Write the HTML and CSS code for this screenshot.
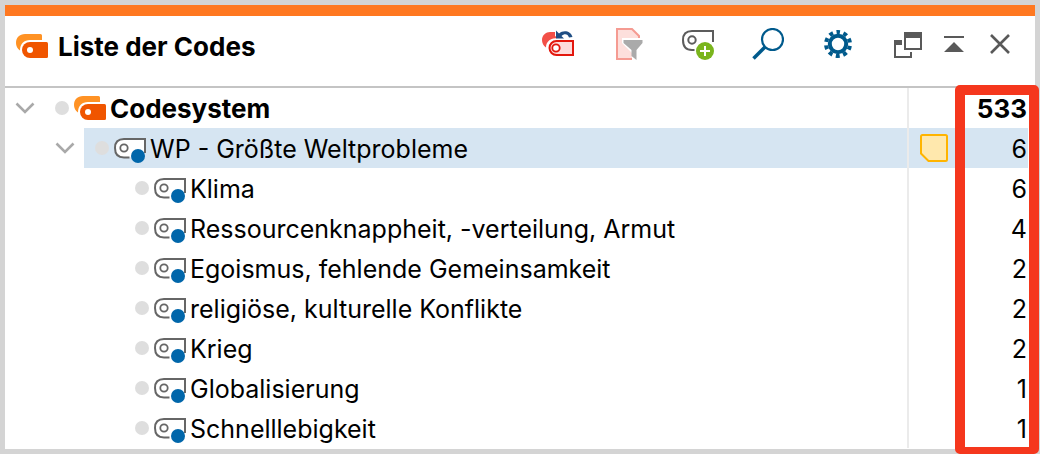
FILE: index.html
```html
<!DOCTYPE html>
<html lang="de">
<head>
    <meta charset="UTF-8">
    <meta name="viewport" content="width=device-width, initial-scale=1.0">
    <title>Liste der Codes</title>
    <link rel="stylesheet" href="styles.css">
</head>
<body>
    <svg class="symbols" aria-hidden="true">
        <symbol id="codes" viewBox="0 0 32 24">
            <path d="M4 16.5A9 9 0 0 1 0 9C0 3.5 3.5 0 9 0h15.500a1.500 1.500 0 0 1 1.500 1.500V6H14C8 6 4 10 4 16.500z" fill="#ff9224"/>
            <path d="M14 8h16.500A1.500 1.500 0 0 1 32 9.500v13a1.500 1.500 0 0 1-1.500 1.500H14a8 8 0 0 1 0-16z" fill="#f05500"/>
            <circle cx="14" cy="16" r="3" fill="#fff"/>
        </symbol>
        <symbol id="code" viewBox="0 0 32 30">
            <path d="M31 20V6H10C4 6 1 9 1 15s3 9.500 9 9.500h5.500" fill="#fff" stroke="#666" stroke-width="2"/>
            <circle cx="10" cy="15" r="3.700" fill="none" stroke="#666" stroke-width="1.800"/>
            <circle cx="24" cy="23" r="7" fill="#0066aa"/>
        </symbol>
        <symbol id="chevron" viewBox="0 0 20 12">
            <path d="M1.500 1.500L10 10l8.500-8.500" fill="none" stroke="#a9a9a9" stroke-width="2.600"/>
        </symbol>
    </svg>

    <main class="panel">
        <header class="panel-header">
            <svg class="codes-icon"><use href="#codes"/></svg>
            <h1>Liste der Codes</h1>
            <div class="tools">
                <button type="button" aria-label="Aktivierungen zurücksetzen">
                    <svg viewBox="0 0 32 32">
                        <path d="M4 19.500A9 9 0 0 1 0 12c0-5 4-8 8-8h5v4l3 2C9 10 4 13 4 19.500z" fill="#f25048"/>
                        <path d="M14 2.500v8h8l-2.500-2.500c3-3 6.500-2 7.500 1.500l3.500-.5C29 3 21.500 1.500 17 5.500z" fill="#1f4e84"/>
                        <path d="M14.500 13H31v14H14.500a7 7 0 0 1 0-14z" fill="#fddcdc" stroke="#e3170d" stroke-width="2"/>
                        <circle cx="14" cy="20" r="3.700" fill="#fff" stroke="#e3170d" stroke-width="1.800"/>
                    </svg>
                </button>
                <button type="button" aria-label="Filter">
                    <svg viewBox="0 0 32 32">
                        <path d="M5 1h15l7 7v23H5z" fill="#fddfdc" stroke="#f59b92" stroke-width="2"/>
                        <path d="M10 10h20v22H20v-7l-10-10z" fill="#fff"/>
                        <path d="M11.500 12h19v3L24.500 22v10l-5-4v-6l-8-7z" fill="#aaa"/>
                    </svg>
                </button>
                <button type="button" aria-label="Neuer Code">
                    <svg viewBox="0 0 32 32">
                        <path d="M31 14V3H10C4 3 1 6 1 12s3 10 9 10h2.500" fill="none" stroke="#5c5c5c" stroke-width="2"/>
                        <circle cx="10" cy="12" r="3.700" fill="none" stroke="#5c5c5c" stroke-width="2"/>
                        <circle cx="23" cy="23" r="9" fill="#7ab51d"/>
                        <path d="M23 18v10M18 23h10" stroke="#fff" stroke-width="2"/>
                    </svg>
                </button>
                <button type="button" aria-label="Suchen">
                    <svg viewBox="0 0 32 32">
                        <circle cx="20.500" cy="11.500" r="10.500" fill="none" stroke="#005a8c" stroke-width="2.200"/>
                        <path d="M13 19L1.500 30.500" stroke="#005a8c" stroke-width="3.600"/>
                    </svg>
                </button>
                <button type="button" aria-label="Einstellungen">
                    <svg viewBox="0 0 32 32">
                        <circle cx="16" cy="16" r="8.200" fill="none" stroke="#005a8c" stroke-width="4"/>
                        <circle cx="16" cy="16" r="12" fill="none" stroke="#005a8c" stroke-width="4" stroke-dasharray="4 3.540" stroke-dashoffset="2" transform="rotate(-90 16 16)"/>
                    </svg>
                </button>
                <button type="button" aria-label="Fenster lösen">
                    <svg viewBox="0 0 32 32">
                        <path d="M12 4h18v18H12zM14 10v10h14V10z" fill="#595959" fill-rule="evenodd"/>
                        <path d="M2 12h8v5H4v11h14v-4h2v6H2z" fill="#595959"/>
                    </svg>
                </button>
                <div class="window-tools">
                    <button type="button" aria-label="Minimieren">
                        <svg viewBox="0 0 32 32"><path d="M6 8h20v2H6zM16 14l10 10H6z" fill="#595959"/></svg>
                    </button>
                    <button type="button" aria-label="Schließen">
                        <svg viewBox="0 0 32 32"><path d="M7 7l18 18M25 7L7 25" stroke="#595959" stroke-width="2.600"/></svg>
                    </button>
                </div>
            </div>
        </header>

        <div class="tree">
            <table aria-label="Codesystem">
                <colgroup>
                    <col>
                    <col class="memo-col">
                    <col class="count-col">
                </colgroup>
                <tbody>
                    <tr class="root">
                        <td>
                            <div class="entry">
                                <button type="button" class="toggle" aria-label="Codesystem zuklappen"><svg><use href="#chevron"/></svg></button>
                                <div class="node"><span class="dot"></span><svg class="codes-icon"><use href="#codes"/></svg><span class="label">Codesystem</span></div>
                            </div>
                        </td>
                        <td class="memo"></td>
                        <td class="count">533</td>
                    </tr>
                    <tr class="selected">
                        <td>
                            <div class="entry level-1">
                                <button type="button" class="toggle" aria-label="WP zuklappen"><svg><use href="#chevron"/></svg></button>
                                <div class="node"><span class="dot"></span><svg class="code-icon"><use href="#code"/></svg><span class="label">WP - Größte Weltprobleme</span></div>
                            </div>
                        </td>
                        <td class="memo">
                            <button type="button" aria-label="Memo">
                                <svg viewBox="0 0 28 28"><path d="M2.500 1h23A1.500 1.500 0 0 1 27 2.500v23a1.500 1.500 0 0 1-1.500 1.500H8.500L1 19.500v-17A1.500 1.500 0 0 1 2.500 1z" fill="#ffe8ad" stroke="#ffb400" stroke-width="2"/></svg>
                            </button>
                        </td>
                        <td class="count">6</td>
                    </tr>
                    <tr>
                        <td><div class="entry level-2"><div class="node"><span class="dot"></span><svg class="code-icon"><use href="#code"/></svg><span class="label">Klima</span></div></div></td>
                        <td class="memo"></td>
                        <td class="count">6</td>
                    </tr>
                    <tr>
                        <td><div class="entry level-2"><div class="node"><span class="dot"></span><svg class="code-icon"><use href="#code"/></svg><span class="label">Ressourcenknappheit, -verteilung, Armut</span></div></div></td>
                        <td class="memo"></td>
                        <td class="count">4</td>
                    </tr>
                    <tr>
                        <td><div class="entry level-2"><div class="node"><span class="dot"></span><svg class="code-icon"><use href="#code"/></svg><span class="label">Egoismus, fehlende Gemeinsamkeit</span></div></div></td>
                        <td class="memo"></td>
                        <td class="count">2</td>
                    </tr>
                    <tr>
                        <td><div class="entry level-2"><div class="node"><span class="dot"></span><svg class="code-icon"><use href="#code"/></svg><span class="label">religiöse, kulturelle Konflikte</span></div></div></td>
                        <td class="memo"></td>
                        <td class="count">2</td>
                    </tr>
                    <tr>
                        <td><div class="entry level-2"><div class="node"><span class="dot"></span><svg class="code-icon"><use href="#code"/></svg><span class="label">Krieg</span></div></div></td>
                        <td class="memo"></td>
                        <td class="count">2</td>
                    </tr>
                    <tr>
                        <td><div class="entry level-2"><div class="node"><span class="dot"></span><svg class="code-icon"><use href="#code"/></svg><span class="label">Globalisierung</span></div></div></td>
                        <td class="memo"></td>
                        <td class="count">1</td>
                    </tr>
                    <tr>
                        <td><div class="entry level-2"><div class="node"><span class="dot"></span><svg class="code-icon"><use href="#code"/></svg><span class="label">Schnelllebigkeit</span></div></div></td>
                        <td class="memo"></td>
                        <td class="count">1</td>
                    </tr>
                </tbody>
            </table>
            <div class="count-frame"></div>
        </div>
    </main>
</body>
</html>
```

FILE: styles.css
```css
body {
    margin: 0;
    padding: 5px;
    background: #d4d4d4;
    color: #000;
    font-family: Inter, "Liberation Sans", sans-serif;
    font-size: 25px;
    line-height: 38px;
}

svg {
    display: block;
    flex-shrink: 0;
}

button {
    display: block;
    padding: 0;
    border: none;
    background: none;
    cursor: pointer;
}

.symbols {
    position: absolute;
    width: 0;
    height: 0;
}

.panel {
    background: #fff;
    border-top: 11px solid #ff7820;
}

.panel-header {
    display: flex;
    align-items: center;
    box-sizing: border-box;
    height: 72px;
    padding: 0 19px 10px 11px;
    border-bottom: 2px solid #c4c4c4;
}

.panel-header h1 {
    margin: 0 0 0 10px;
    padding-top: 2px;
    font-size: 26px;
    font-weight: 700;
    white-space: nowrap;
}

.tools {
    display: flex;
    gap: 38px;
    margin-left: auto;
    padding-bottom: 4px;
}

.tools svg {
    width: 32px;
    height: 32px;
}

.window-tools {
    display: flex;
    gap: 14px;
    margin-left: -24px;
}

.codes-icon {
    width: 32px;
    height: 24px;
}

.code-icon {
    width: 32px;
    height: 30px;
}

.tree {
    position: relative;
    padding: 0 7px 1px 0;
}

table {
    width: 100%;
    table-layout: fixed;
    border-spacing: 0;
}

td {
    height: 40px;
    padding: 0;
    box-sizing: border-box;
}

.memo-col {
    width: 48px;
}

.count-col {
    width: 73px;
}

.entry {
    display: flex;
    align-items: center;
    padding-left: 10px;
}

.level-1 {
    padding-left: 50px;
}

.level-2 {
    padding-left: 119px;
}

.toggle {
    margin-right: 9px;
}

.toggle svg {
    width: 20px;
    height: 12px;
}

.node {
    display: flex;
    flex: 1;
    align-items: center;
    height: 40px;
    padding-left: 11px;
    white-space: nowrap;
}

.dot {
    width: 14px;
    height: 14px;
    margin-right: 5px;
    border-radius: 50%;
    background: #dedede;
}

.node svg {
    margin-right: 4px;
}

.label {
    padding-top: 2px;
}

.root {
    font-size: 26px;
    font-weight: 700;
}

.memo {
    border-left: 2px solid #ebebeb;
    padding-left: 11px;
}

.memo svg {
    width: 28px;
    height: 28px;
}

.count {
    padding: 2px 1px 0 0;
    text-align: right;
}

.selected .node,
.selected .memo,
.selected .count {
    background: #d6e5f2;
}

/* marks the column with the code frequencies */
.count-frame {
    position: absolute;
    top: -3px;
    right: -4px;
    bottom: -5px;
    box-sizing: border-box;
    width: 84px;
    border: 10px solid #f5371d;
    border-bottom-width: 7px;
    border-radius: 5px;
    pointer-events: none;
}
```
